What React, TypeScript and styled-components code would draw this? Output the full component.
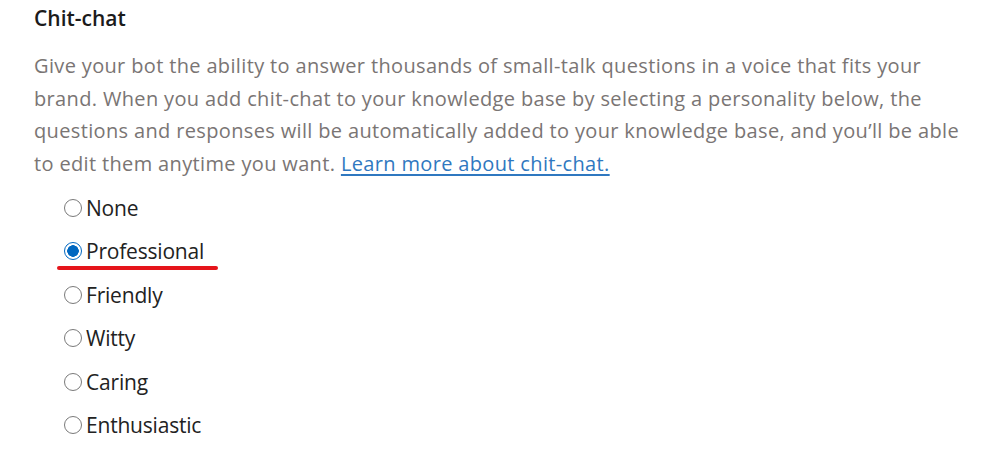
import React from "react";
import styled, { createGlobalStyle } from "styled-components";

const Global = createGlobalStyle`
  html, body { margin: 0; padding: 0; background: #ffffff; }
  body { font-family: "Open Sans", "Noto Sans", "Liberation Sans", sans-serif; }
`;

const Page = styled.div`
  padding: 4px 0 0 34px;
  width: 940px;
`;

const Title = styled.h2`
  margin: 0;
  font-size: 21px;
  font-weight: 600;
  color: #1b1b1b;
  line-height: 28px;
  letter-spacing: 0;
`;

const Description = styled.p`
  margin: 18px 0 0;
  font-size: 20px;
  line-height: 32.5px;
  color: #7a7574;
  letter-spacing: 0.35px;
  width: 934px;
`;

const Link = styled.a`
  color: #2f78c0;
  text-decoration: underline;
  text-decoration-thickness: 1.5px;
  text-underline-offset: 3px;
`;

const Options = styled.div`
  display: flex;
  flex-direction: column;
  margin: 6px 0 0 30px;
`;

const Option = styled.label`
  position: relative;
  display: flex;
  align-items: center;
  height: 43.5px;
  font-size: 21px;
  color: #222;
  letter-spacing: -0.2px;
  cursor: pointer;
`;

const RadioInput = styled.input`
  appearance: none;
  margin: 0 4px 0 0;
  width: 18px;
  height: 18px;
  border-radius: 50%;
  border: 1px solid #7a7a7a;
  background: #fff;
  box-sizing: border-box;
  &:checked {
    border-color: #0067c0;
    background: radial-gradient(circle, #0067c0 0 5.5px, #fff 6px);
  }
`;

const Highlight = styled.span`
  position: absolute;
  left: -7px;
  width: 161px;
  top: 36px;
  height: 4px;
  border-radius: 2px;
  background: #e5151b;
`;

const choices = ["None", "Professional", "Friendly", "Witty", "Caring", "Enthusiastic"];

export default function App() {
  const [value, setValue] = React.useState("Professional");
  return (
    <>
      <Global />
      <Page>
        <Title>Chit-chat</Title>
        <Description>
          Give your bot the ability to answer thousands of small-talk questions in a voice that fits your
          brand. When you add chit-chat to your knowledge base by selecting a personality below, the
          questions and responses will be automatically added to your knowledge base, and you’ll be able
          to edit them anytime you want. <Link href="#">Learn more about chit-chat.</Link>
        </Description>
        <Options>
          {choices.map((c) => (
            <Option key={c}>
              <RadioInput
                type="radio"
                name="personality"
                checked={value === c}
                onChange={() => setValue(c)}
              />
              {c}
              {c === "Professional" && <Highlight />}
            </Option>
          ))}
        </Options>
      </Page>
    </>
  );
}
